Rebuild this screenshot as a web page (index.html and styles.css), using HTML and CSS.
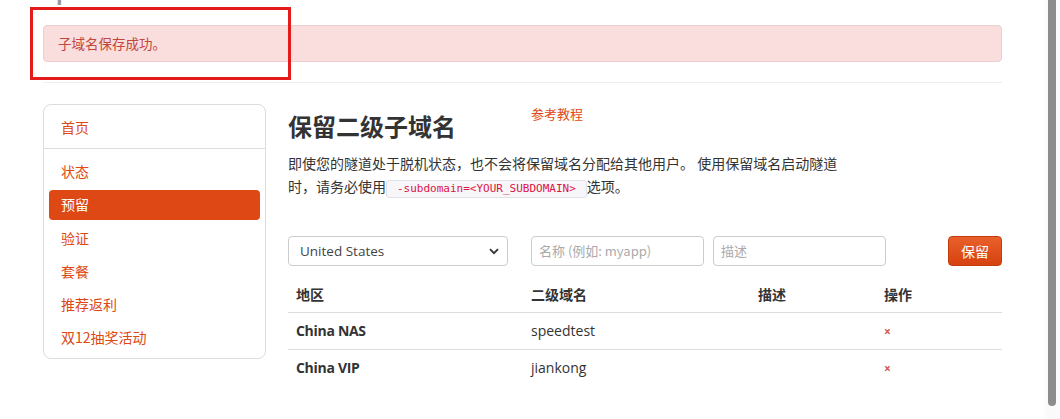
FILE: index.html
```html
<!DOCTYPE html>
<html lang="zh-CN">
<head>
<meta charset="utf-8">
<title>保留二级子域名</title>
<link rel="stylesheet" href="styles.css">
</head>
<body>
<div class="viewport">
  <div class="page">
    <div class="container">
      <h2 class="site-title">speedtest</h2>
      <div class="alert">子域名保存成功。</div>
      <hr class="divider">
      <div class="row">
        <aside class="sidebar">
          <a class="nav-item first" href="#">首页</a>
          <div class="nav-sep"></div>
          <a class="nav-item" href="#">状态</a>
          <a class="nav-item active" href="#">预留</a>
          <a class="nav-item" href="#">验证</a>
          <a class="nav-item" href="#">套餐</a>
          <a class="nav-item" href="#">推荐返利</a>
          <a class="nav-item" href="#">双12抽奖活动</a>
        </aside>
        <main class="content">
          <div class="head-row">
            <h1 class="title">保留二级子域名</h1>
            <a class="ref-link" href="#">参考教程</a>
          </div>
          <p class="desc">即使您的隧道处于脱机状态，也不会将保留域名分配给其他用户。 使用保留域名启动隧道时，请务必使用<code>-subdomain=&lt;YOUR_SUBDOMAIN&gt;</code>选项。</p>
          <form class="form-row">
            <div class="select">United States<svg class="chev" width="10" height="7" viewBox="0 0 10 7"><path d="M1 1.2 5 5.2 9 1.2" fill="none" stroke="#333" stroke-width="1.8"/></svg></div>
            <div class="input placeholder">名称 (例如: myapp)</div>
            <div class="input placeholder">描述</div>
            <button class="btn" type="button">保留</button>
          </form>
          <table class="tbl">
            <thead>
              <tr><th class="c1">地区</th><th class="c2">二级域名</th><th class="c3">描述</th><th class="c4">操作</th></tr>
            </thead>
            <tbody>
              <tr><td class="region">China NAS</td><td>speedtest</td><td></td><td><span class="del">×</span></td></tr>
              <tr><td class="region">China VIP</td><td>jiankong</td><td></td><td><span class="del">×</span></td></tr>
            </tbody>
          </table>
        </main>
      </div>
    </div>
    <div class="annotation"></div>
  </div>
  <div class="scrollbar"><div class="thumb"></div></div>
</div>
</body>
</html>
```
FILE: styles.css
```css
* { box-sizing: border-box; }
html, body { margin: 0; padding: 0; height: 100%; overflow: hidden; background: #fff; }
body {
  font-family: "Open Sans", "Noto Sans", "Noto Sans CJK SC", sans-serif;
  font-size: 14px;
  color: #333;
}
.viewport { display: flex; height: 419px; }
.page { flex: 1; position: relative; overflow: hidden; }
.container { width: 959px; margin: 0 auto; }
.site-title {
  margin: -19px 0 0 2px;
  height: 20px;
  font-size: 22px;
  line-height: 20px;
  color: #999;
  font-weight: bold;
}
.alert {
  margin-top: 24px;
  height: 37px;
  padding: 0 14px;
  line-height: 35px;
  background: #f9dedd;
  border: 1px solid #eccfd0;
  border-radius: 4px;
  color: #c2463c;
  font-family: "Noto Sans CJK SC", sans-serif;
  font-size: 13.5px;
}
.divider { margin: 20px 0 21px; border: 0; border-top: 1px solid #eee; }
.row { display: flex; gap: 22px; align-items: flex-start; }
.sidebar {
  width: 223px;
  flex: none;
  border: 1px solid #ddd;
  border-radius: 8px;
  padding: 7px 5px 3px;
  display: flex;
  flex-direction: column;
}
.nav-item {
  display: block;
  height: 33px;
  line-height: 31px;
  padding: 0 12px;
  color: #dd4814;
  text-decoration: none;
  font-family: "Noto Sans CJK SC", sans-serif;
  font-size: 14px;
  border-radius: 4px;
}
.nav-item.first { height: 30px; line-height: 30px; margin-bottom: 6px; }
.nav-sep { border-top: 1px solid #ddd; margin: 0 -5px 7px; }
.nav-item.active { background: #dd4814; color: #fff; height: 30px; line-height: 29px; margin: 1px 0 3px; }
.content { flex: 1; min-width: 0; }
.head-row { display: flex; align-items: flex-start; }
.title {
  margin: 6px 0 0;
  width: 243px;
  font-family: "Noto Sans CJK SC", sans-serif;
  font-size: 24px;
  line-height: 32px;
  font-weight: bold;
  color: #333;
}
.ref-link {
  color: #dd4814;
  text-decoration: none;
  font-family: "Noto Sans CJK SC", sans-serif;
  font-size: 13px;
  line-height: 20px;
}
.desc {
  margin: 10px 0 0;
  width: 556px;
  line-height: 23px;
  font-family: "Noto Sans CJK SC", sans-serif;
  font-size: 14px;
  color: #333;
}
.desc code {
  display: inline-block;
  line-height: 16px;
  font-family: "DejaVu Sans Mono", "Liberation Mono", monospace;
  font-size: 11px;
  color: #dd1144;
  background: #f7f7f9;
  border: 1px solid #e1e1e8;
  border-radius: 3px;
  padding: 0 10px;
  vertical-align: 0;
}
.form-row {
  margin: 38px 0 0;
  display: flex;
  align-items: center;
  height: 30px;
}
.select, .input {
  height: 30px;
  border: 1px solid #ccc;
  border-radius: 4px;
  padding: 0 7px;
  line-height: 28px;
  font-size: 14px;
}
.select {
  width: 220px;
  margin-right: 23px;
  display: flex;
  justify-content: space-between;
  align-items: center;
  padding: 0 8px 0 11px;
  color: #444;
  font-family: "Open Sans", sans-serif;
  font-size: 13.5px;
}
.input { width: 173px; margin-right: 9px; color: #aaa; font-family: "Noto Sans CJK SC", "Open Sans", sans-serif; font-size: 13px; }
.btn {
  margin-left: auto;
  width: 54px;
  height: 30px;
  border: 1px solid #c43c0d;
  border-radius: 4px;
  background: linear-gradient(#e9602b, #d6420f);
  color: #fff;
  font-family: "Noto Sans CJK SC", sans-serif;
  font-size: 14px;
  padding: 0;
}
.tbl { width: 100%; border-collapse: collapse; margin-top: 14px; }
.tbl th, .tbl td { text-align: left; padding: 0 8px; }
.tbl th {
  height: 32px;
  padding-bottom: 4px;
  font-family: "Noto Sans CJK SC", sans-serif;
  font-size: 14px;
  font-weight: bold;
  vertical-align: middle;
  border-bottom: 1px solid #ddd;
}
.tbl td { height: 37px; vertical-align: middle; border-bottom: 1px solid #ddd; font-size: 14px; color: #333; }
.tbl tbody tr:last-child td { border-bottom: 0; }
.c1 { width: 235px; }
.c2 { width: 227px; }
.c3 { width: 126px; }
.region { font-weight: bold; letter-spacing: -0.3px; }
.del { color: #d9534f; font-size: 12px; font-weight: bold; }
.annotation {
  position: absolute;
  left: 30px;
  top: 7px;
  width: 261px;
  height: 73px;
  border: 3px solid #e31b1b;
}
.scrollbar { width: 15px; flex: none; background: #fafafa; position: relative; }
.thumb {
  position: absolute;
  left: 3px;
  top: 0;
  width: 8px;
  height: 406px;
  background: #8c8c8c;
  border-radius: 0 0 4px 4px;
}
```
